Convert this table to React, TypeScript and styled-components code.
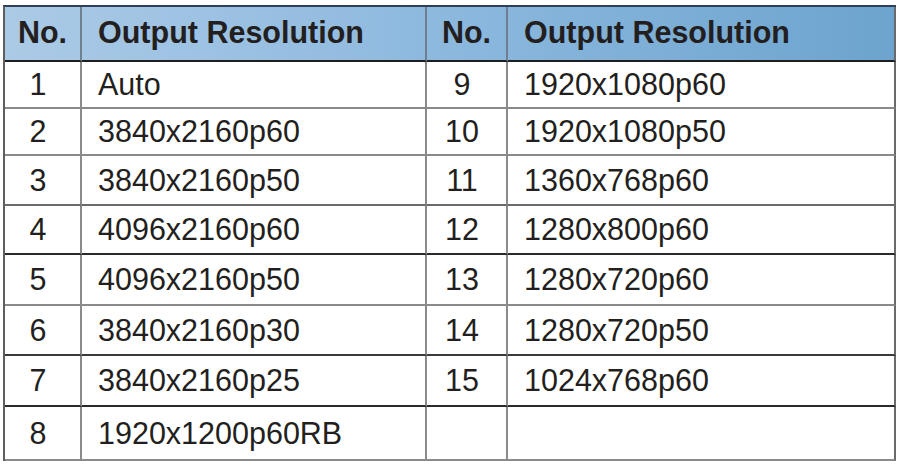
import styled, { createGlobalStyle } from "styled-components";

const GlobalStyle = createGlobalStyle`
  body {
    margin: 0;
    background: #ffffff;
    font-family: "Liberation Sans", Arial, sans-serif;
    color: #231f20;
  }
`;

const Page = styled.div`
  padding: 5px 0 0 3px;
`;

const Table = styled.div`
  display: flex;
  flex-direction: column;
  width: 893px;
  border-left: 2px solid #5e5e5e;
  border-top: 2px solid #2d4058;
  box-sizing: border-box;
`;

const Row = styled.div<{ $h: number; $head?: boolean }>`
  display: grid;
  grid-template-columns: 77px 345px 81px 388px;
  height: ${(p) => p.$h}px;
  background: ${(p) =>
    p.$head ? "linear-gradient(to right, #abcae6 0%, #8cb8de 50%, #6ca4cf 100%)" : "#ffffff"};
`;

const Cell = styled.div<{ $center?: boolean; $line: string; $head?: boolean; $last?: boolean }>`
  display: flex;
  align-items: center;
  justify-content: ${(p) => (p.$center ? "center" : "flex-start")};
  padding-left: ${(p) => (p.$center ? 0 : 16)}px;
  padding-right: ${(p) => (p.$center && !p.$head ? 9 : 0)}px;
  padding-bottom: ${(p) => (p.$head ? 3 : 0)}px;
  box-sizing: border-box;
  border-right: 2px solid ${(p) => (p.$last ? "#6a6a6a" : p.$head ? "#6f7f90" : "#8a8a8a")};
  border-bottom: 2px solid ${(p) => p.$line};
  font-size: 30.5px;
  font-weight: ${(p) => (p.$head ? 700 : 400)};
  white-space: nowrap;
`;

interface IEntry {
  no: number;
  res: string;
}

const left: IEntry[] = [
  { no: 1, res: "Auto" },
  { no: 2, res: "3840x2160p60" },
  { no: 3, res: "3840x2160p50" },
  { no: 4, res: "4096x2160p60" },
  { no: 5, res: "4096x2160p50" },
  { no: 6, res: "3840x2160p30" },
  { no: 7, res: "3840x2160p25" },
  { no: 8, res: "1920x1200p60RB" },
];

const right: (IEntry | null)[] = [
  { no: 9, res: "1920x1080p60" },
  { no: 10, res: "1920x1080p50" },
  { no: 11, res: "1360x768p60" },
  { no: 12, res: "1280x800p60" },
  { no: 13, res: "1280x720p60" },
  { no: 14, res: "1280x720p50" },
  { no: 15, res: "1024x768p60" },
  null,
];

// row heights and bottom line colours, measured off the picture
const heights = [47, 47, 50, 49, 51, 50, 51, 54];
const lines = ["#8a8a8a", "#8a8a8a", "#6a6a6a", "#2a2a2a", "#8a8a8a", "#3a3a3a", "#2a2a2a", "#8a8a8a"];

function App() {
  return (
    <Page>
      <GlobalStyle />
      <Table>
        <Row $h={55} $head>
          <Cell $head $center $line="#1e1e1e">No.</Cell>
          <Cell $head $line="#1e1e1e">Output Resolution</Cell>
          <Cell $head $center $line="#1e1e1e">No.</Cell>
          <Cell $head $last $line="#1e1e1e">Output Resolution</Cell>
        </Row>
        {left.map((item, i) => {
          const r = right[i];
          return (
            <Row key={item.no} $h={heights[i]}>
              <Cell $center $line={lines[i]}>{item.no}</Cell>
              <Cell $line={lines[i]}>{item.res}</Cell>
              <Cell $center $line={lines[i]}>{r ? r.no : ""}</Cell>
              <Cell $last $line={lines[i]}>{r ? r.res : ""}</Cell>
            </Row>
          );
        })}
      </Table>
    </Page>
  );
}

export default App;
